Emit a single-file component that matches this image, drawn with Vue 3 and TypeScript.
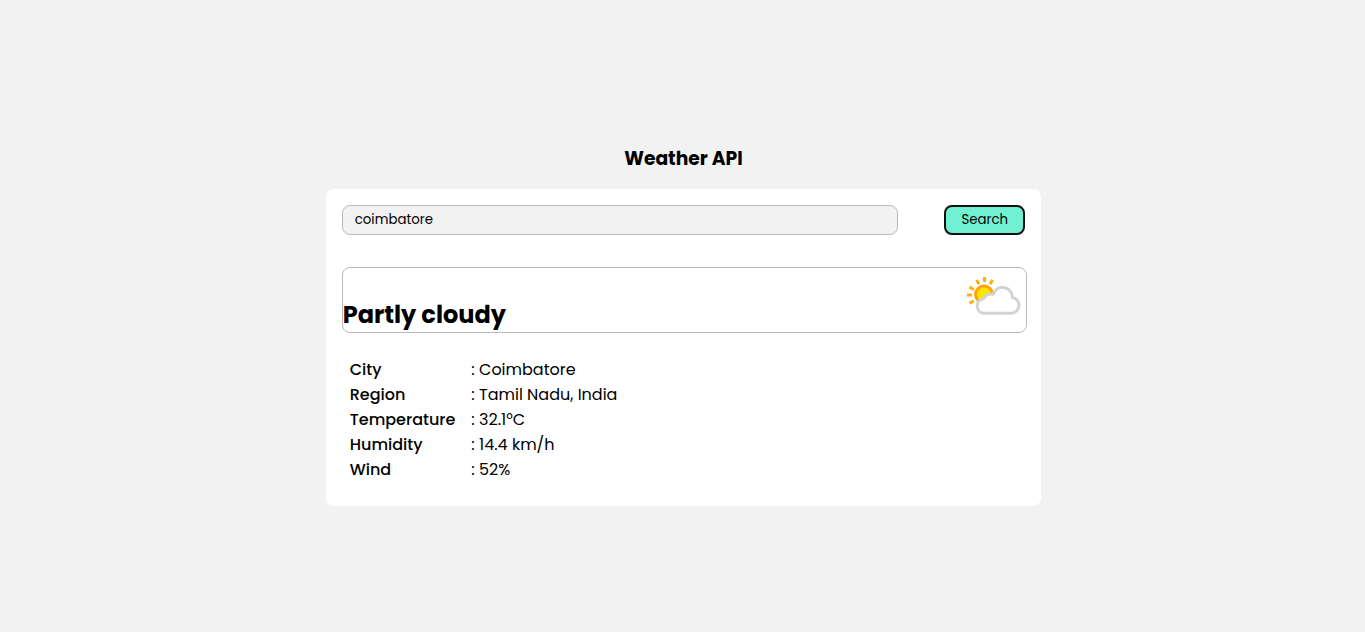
<script setup lang="ts">
import { ref } from 'vue'

interface Detail {
  label: string
  value: string
}

const city = ref('coimbatore')
const condition = 'Partly cloudy'
const details: Detail[] = [
  { label: 'City', value: 'Coimbatore' },
  { label: 'Region', value: 'Tamil Nadu, India' },
  { label: 'Temperature', value: '32.1°C' },
  { label: 'Humidity', value: '14.4 km/h' },
  { label: 'Wind', value: '52%' },
]
</script>

<template>
  <main class="page">
    <h3 class="title">Weather API</h3>
    <section class="card">
      <form class="search" @submit.prevent>
        <input v-model="city" class="field" type="text" aria-label="City" />
        <button class="submit" type="submit">Search</button>
      </form>
      <div class="summary">
        <h2 class="condition">{{ condition }}</h2>
        <svg class="icon" viewBox="2 1 64 64" aria-hidden="true">
          <path
            d="M24.500 10v5M16.500 13l2.600 4.300M32.600 12.900l-2.600 4.300M9.500 20l4.400 2.600M7 28h5M9.500 36.300l4.400-2.600"
            stroke="#ffb010"
            stroke-width="3"
          />
          <circle cx="24" cy="27.500" r="8.500" fill="#ffe600" stroke="#ffa30a" stroke-width="3" />
          <path
            d="M23.500 46.300H51a8 8 0 0 0 1.300-15.900A9.700 9.700 0 0 0 33.300 27.300C28.500 26.500 24.500 28.500 23.800 31.800A7.300 7.300 0 0 0 23.500 46.300z"
            fill="#fff"
            stroke="#d2d2d2"
            stroke-width="3"
            stroke-linejoin="round"
          />
        </svg>
      </div>
      <table class="details">
        <tbody>
          <tr v-for="item in details" :key="item.label">
            <th scope="row">{{ item.label }}</th>
            <td>: {{ item.value }}</td>
          </tr>
        </tbody>
      </table>
    </section>
  </main>
</template>

<style>
body {
  background: #f2f2f2;
}
</style>

<style scoped>
.page {
  box-sizing: border-box;
  min-height: 100vh;
  padding-left: 2px;
  display: flex;
  flex-direction: column;
  align-items: center;
  justify-content: center;
  font-family: Poppins, Inter, sans-serif;
  font-size: 16px;
  color: #000;
}

.title {
  margin: 19px 0 16px;
  line-height: 28px;
  font-weight: 700;
}

.card {
  box-sizing: border-box;
  width: calc(50% + 34px);
  padding: 16px;
  border-radius: 8px;
  background: #fff;
}

.search {
  display: flex;
  justify-content: space-between;
  gap: 46px;
  margin-bottom: 32px;
}

.field {
  box-sizing: border-box;
  flex: 1;
  min-width: 0;
  height: 30px;
  padding: 0 12px;
  border: 1px solid #bababa;
  border-radius: 8px;
  background: #f2f2f2;
  color: #000;
  font-family: inherit;
}

.submit {
  box-sizing: border-box;
  width: 81px;
  height: 30px;
  padding: 0;
  border: 2px solid #111;
  border-radius: 8px;
  background: #72f0d3;
  color: #000;
  font-family: inherit;
}

.summary {
  display: flex;
  justify-content: space-between;
  align-items: flex-end;
  height: 64px;
  margin-right: -2px;
  border: 1px solid #bababa;
  border-radius: 8px;
}

.condition {
  margin: 0;
  font-size: 24px;
  line-height: 34px;
  font-weight: 700;
}

.icon {
  width: 64px;
  height: 64px;
}

.details {
  margin: 24px 0 8px;
  padding-left: 8px;
  border-spacing: 0;
  line-height: 25px;
}

th,
td {
  padding: 0 16px 0 0;
  text-align: left;
}

th {
  font-weight: 500;
}
</style>
